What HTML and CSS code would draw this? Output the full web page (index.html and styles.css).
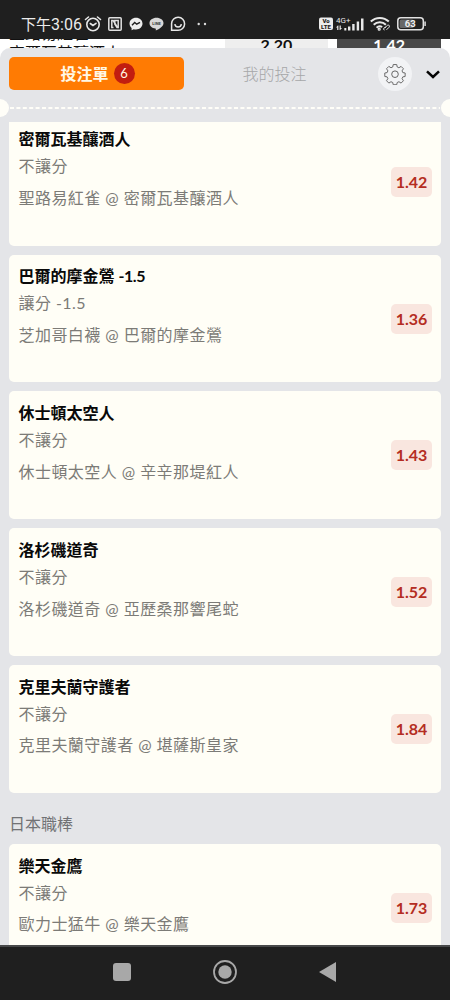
FILE: index.html
```html
<!DOCTYPE html>
<html lang="zh-Hant">
<head>
<meta charset="utf-8">
<title>投注單</title>
<link rel="stylesheet" href="styles.css">
</head>
<body>
<div class="phone">
  <header class="status">
    <div class="clock"><span class="clock-cjk">下午</span>3:06</div>
    <svg class="i-alarm" width="18" height="18" viewBox="0 0 18 18" fill="none" stroke="#e8e8e8" stroke-width="1.6" stroke-linecap="round"><circle cx="9" cy="9.5" r="6.2"/><path d="M1.5 4.5 4.5 2M16.5 4.5 13.500 2M6.300 8.500 9 10.500l3-2.200"/></svg>
    <svg class="i-nfc" width="14" height="14" viewBox="0 0 14 14" fill="none" stroke="#e0e0e0" stroke-width="1.500"><rect x=".8" y=".8" width="12.400" height="12.400" rx="1"/><path d="M5.500 10.500H3.800V3.500h1.400l4 6.500M6.800 3.500h3.400v7H9L6.800 7z"/></svg>
    <svg class="i-msg" width="14" height="14" viewBox="0 0 14 14"><path d="M7 .7C3.200.700.500 3.300.500 6.600c0 1.800.8 3.300 2.100 4.400v2.300l2.100-1.100c.7.200 1.500.3 2.300.3 3.800 0 6.500-2.600 6.500-5.900S10.800.700 7 .7z" fill="#ededed"/><path d="M3 8.300l2.700-2.800 2 1.700L11 5.300" fill="none" stroke="#1f1f1f" stroke-width="1.400"/></svg>
    <svg class="i-line" width="15" height="14" viewBox="0 0 15 14"><path d="M7.500.800C3.600.800.500 3.200.500 6.200c0 2.700 2.500 4.900 5.900 5.300.7.100.4 1.200.4 2 2.500-1.100 7.700-4 7.700-7.300 0-3-3.100-5.400-7-5.400z" fill="#d8d8d8"/><text x="7.500" y="7.800" class="line-text">LINE</text></svg>
    <svg class="i-chat" width="16" height="16" viewBox="0 0 16 16" fill="none" stroke="#e8e8e8" stroke-width="1.500"><path d="M1.600 14.300V7.600A6.500 6.500 0 1 1 8 14.300z"/><path d="M4.800 8.200c.4 2 1.600 2.900 3.300 2.900s2.900-.9 3.300-2.900"/></svg>
    <svg class="i-dots" width="10" height="4" viewBox="0 0 10 4" fill="#ddd"><circle cx="1.700" cy="2" r="1.200"/><circle cx="8" cy="2" r="1.200"/></svg>
    <svg class="i-volte" width="14" height="14" viewBox="0 0 14 14"><rect x="0" y=".5" width="14" height="12.500" rx="2" fill="#ececec"/><text x="7" y="6.300" class="volte-text">Vo</text><text x="7" y="12" class="volte-text">LTE</text></svg>
    <svg class="i-signal" width="29" height="16" viewBox="0 0 29 16" fill="#e8e8e8"><text x="0" y="6.500" class="net-text">4G+</text><path d="M1.800 9.500 0 11.500h1.200V14h1.200v-4.500zM4.200 14 6 12H4.800V9.500H3.600V14z"/><rect x="8.300" y="12" width="2" height="2.500"/><rect x="12" y="10.500" width="2.400" height="4"/><rect x="16.200" y="8" width="2.400" height="6.500"/><rect x="20.700" y="5.500" width="2.400" height="9"/><rect x="25" y="2.500" width="2.500" height="12"/></svg>
    <svg class="i-wifi" width="21" height="16" viewBox="0 0 21 16" fill="none" stroke="#e8e8e8" stroke-width="2"><path d="M.8 5.500a13 13 0 0 1 18 0M3.700 8.700a8.800 8.800 0 0 1 12.200 0M6.600 11.700a4.700 4.700 0 0 1 5.600-.7"/><circle cx="9.200" cy="13.200" r=".6"/><path d="M14.500 14c-2-.3-.5-3 1-2.700M16.500 13.800l2.500-2.500c1.500-2-1-3-2.500-1.300l-1.800 2.300" stroke-width="1"/></svg>
    <svg class="i-bat" width="30" height="14" viewBox="0 0 30 14"><rect x=".8" y=".8" width="25.500" height="12" rx="3" fill="none" stroke="#e2e2e2" stroke-width="1.500"/><rect x="2.600" y="2.600" width="14" height="8.400" rx="1.500" fill="#686868"/><path d="M28.100 4.500v4.500" stroke="#ddd" stroke-width="1.500"/><text x="13.300" y="10.200" class="bat-text">63</text></svg>
  </header>

  <div class="behind">
    <div class="teams"><div>聖路易紅雀</div><div>密爾瓦基釀酒人</div></div>
    <div class="price">2.20</div>
    <div class="price price-on">1.42</div>
  </div>

  <main class="sheet">
    <div class="tabs">
      <div class="tab tab-on">投注單<span class="count">6</span></div>
      <div class="tab">我的投注</div>
      <div class="gear"><svg width="22" height="22" viewBox="0 0 22 22" fill="none" stroke="#666" stroke-width="1"><path d="M9.200 1.500h3.600l.5 2.500 1.800.8 2.200-1.400 2.400 2.400-1.400 2.200.8 1.800 2.400.4v3.600l-2.400.4-.8 1.800 1.400 2.200-2.400 2.400-2.200-1.400-1.800.8-.5 2.300H9.200l-.5-2.300-1.800-.8-2.200 1.400-2.400-2.400 1.400-2.200-.8-1.800-2.400-.4v-3.600l2.400-.4.8-1.800-1.400-2.200 2.400-2.400 2.200 1.400 1.800-.8z" transform="translate(.3 .1) scale(.97)"/><circle cx="11" cy="11.200" r="3.300"/></svg></div>
      <svg class="chev" width="14" height="10" viewBox="0 0 14 10" fill="none" stroke="#050505" stroke-width="2.500"><path d="M1 2.300 7 8l6-5.700"/></svg>
    </div>
    <div class="tear"><i class="notch notch-l"></i><svg class="perf" width="432" height="2" viewBox="0 0 432 2"><path d="M1 1h430" stroke="#fffef8" stroke-width="2" stroke-dasharray="4 2.400"/></svg><i class="notch notch-r"></i></div>

    <div class="list">
      <section class="card card-first"><div class="info"><h2>密爾瓦基釀酒人</h2><p class="kind">不讓分</p><p class="match">聖路易紅雀 @ 密爾瓦基釀酒人</p></div><span class="odds">1.42</span></section>
      <section class="card"><div class="info"><h2>巴爾的摩金鶯 <span class="line">-1.5</span></h2><p class="kind">讓分 -1.5</p><p class="match">芝加哥白襪 @ 巴爾的摩金鶯</p></div><span class="odds">1.36</span></section>
      <section class="card"><div class="info"><h2>休士頓太空人</h2><p class="kind">不讓分</p><p class="match">休士頓太空人 @ 辛辛那堤紅人</p></div><span class="odds">1.43</span></section>
      <section class="card"><div class="info"><h2>洛杉磯道奇</h2><p class="kind">不讓分</p><p class="match">洛杉磯道奇 @ 亞歷桑那響尾蛇</p></div><span class="odds">1.52</span></section>
      <section class="card"><div class="info"><h2>克里夫蘭守護者</h2><p class="kind">不讓分</p><p class="match">克里夫蘭守護者 @ 堪薩斯皇家</p></div><span class="odds">1.84</span></section>
      <h3 class="league">日本職棒</h3>
      <section class="card"><div class="info"><h2>樂天金鷹</h2><p class="kind">不讓分</p><p class="match">歐力士猛牛 @ 樂天金鷹</p></div><span class="odds">1.73</span></section>
    </div>
  </main>

  <nav class="nav">
    <svg width="18" height="18" viewBox="0 0 18 18"><rect width="18" height="18" rx="3" fill="#a8a8a8"/></svg>
    <svg width="24" height="24" viewBox="0 0 24 24"><circle cx="12" cy="12" r="11" fill="none" stroke="#a8a8a8" stroke-width="1.800"/><circle cx="12" cy="12" r="6.700" fill="#a8a8a8"/></svg>
    <svg width="17" height="20" viewBox="0 0 17 20"><path d="M0 10 17 0v20z" fill="#a8a8a8"/></svg>
  </nav>
</div>
</body>
</html>
```
FILE: styles.css
```css
* { box-sizing: border-box; }
body { margin: 0; font-family: Lato, "Noto Sans CJK TC", sans-serif; }
h2, h3, p { margin: 0; }
svg { display: block; flex: none; }
.phone { width: 450px; height: 1000px; display: flex; flex-direction: column; overflow: hidden; background: #fff; }

.status { height: 39px; flex: none; display: flex; align-items: center; padding: 9px 0 0 21px; background: #1f1f1f; color: #ececec; position: relative; z-index: 2; }
.clock { width: 63px; flex: none; padding-top: 1px; font: 16px/20px Roboto, "Noto Sans CJK TC", sans-serif; white-space: nowrap; }
.clock-cjk { font-size: 15px; }
.i-nfc { margin-left: 6px; }
.i-msg { margin-left: 7px; }
.i-line { margin-left: 6px; }
.i-chat { margin-left: 6px; }
.i-dots { margin-left: 11px; }
.i-volte { margin-left: 112px; }
.i-signal { margin-left: 3px; }
.i-wifi { margin-left: 5px; }
.i-bat { margin-left: 6px; }
.line-text { font: 700 4px Roboto, sans-serif; text-anchor: middle; fill: #333; }
.volte-text { font: 900 6px Roboto, sans-serif; text-anchor: middle; fill: #1f1f1f; }
.net-text { font: 8px Roboto, sans-serif; }
.bat-text { font: 700 9.500px Roboto, sans-serif; text-anchor: middle; fill: #eee; }

.behind { height: 9px; flex: none; display: flex; gap: 9px; padding: 0 9px; background: #fff; color: #111; font-size: 16px; }
.teams { width: 207px; height: 40px; margin-top: -16px; line-height: 20px; }
.price { width: 104px; height: 20px; background: #eee; text-align: center; font-weight: 700; line-height: 11px; }
.price-on { background: #484848; color: #fff; }

.sheet { flex: 1; min-height: 0; position: relative; display: flex; flex-direction: column; overflow: hidden; background: #e4e5e8; border-radius: 10px 10px 0 0; }
.tabs { height: 50px; flex: none; display: flex; align-items: center; padding: 1px 10px 0 9px; }
.tab { width: 175px; height: 33px; padding-bottom: 1px; display: flex; align-items: center; justify-content: center; gap: 5px; color: #b2b3b5; font-size: 16px; }
.tab + .tab { margin-left: 3px; font-weight: 300; color: #a6a7a9; }
.tab-on { padding-left: 2px; background: #ff7b03; border-radius: 5px; color: #fff8e6; font-weight: 700; }
.count { width: 21px; height: 21px; margin-top: 1px; border-radius: 50%; background: #c21d10; font-size: 13px; line-height: 21px; text-align: center; font-weight: 400; }
.gear { width: 34px; height: 34px; margin-left: 16px; border-radius: 50%; background: #f2f3f5; display: grid; place-items: center; }
.chev { margin-left: 14px; }
.tear { height: 20px; flex: none; display: flex; align-items: center; }
.notch { width: 9px; height: 18px; flex: none; background: #fffef8; }
.notch-l { border-radius: 0 9px 9px 0; }
.notch-r { border-radius: 9px 0 0 9px; }

.list { flex: 1; min-height: 0; overflow: hidden; margin-top: 4px; padding: 0 9px; display: flex; flex-direction: column; }
.card { height: 127.900px; flex: none; margin-bottom: 9px; padding: 10.800px 9px 0 9.500px; display: flex; justify-content: space-between; background: #fffef6; border-radius: 5px; }
.card-first { height: 123.500px; padding-top: 6.300px; border-radius: 0 0 5px 5px; }
.card h2 { font-size: 16px; line-height: 22px; font-weight: 700; color: #090909; }
.line { letter-spacing: -.4px; }
.card p { font-size: 16px; line-height: 22px; letter-spacing: .45px; color: #7c7b77; font-weight: 400; }
.kind { margin-top: 5px; }
.match { margin-top: 9.500px; }
.odds { width: 41px; height: 30px; margin-top: 38.300px; border-radius: 5px; background: #f9e6df; color: #b42d22; font-size: 16px; line-height: 30px; text-align: center; font-weight: 700; }
.league { height: 42px; flex: none; padding: 11px 0 0; font-size: 16px; line-height: 22px; font-weight: 400; color: #717275; }

.nav { height: 55px; flex: none; display: flex; align-items: center; gap: 82px; padding: 0 0 3px 113px; border-top: 2px solid #48494a; background: #1f1f1f; }
```
